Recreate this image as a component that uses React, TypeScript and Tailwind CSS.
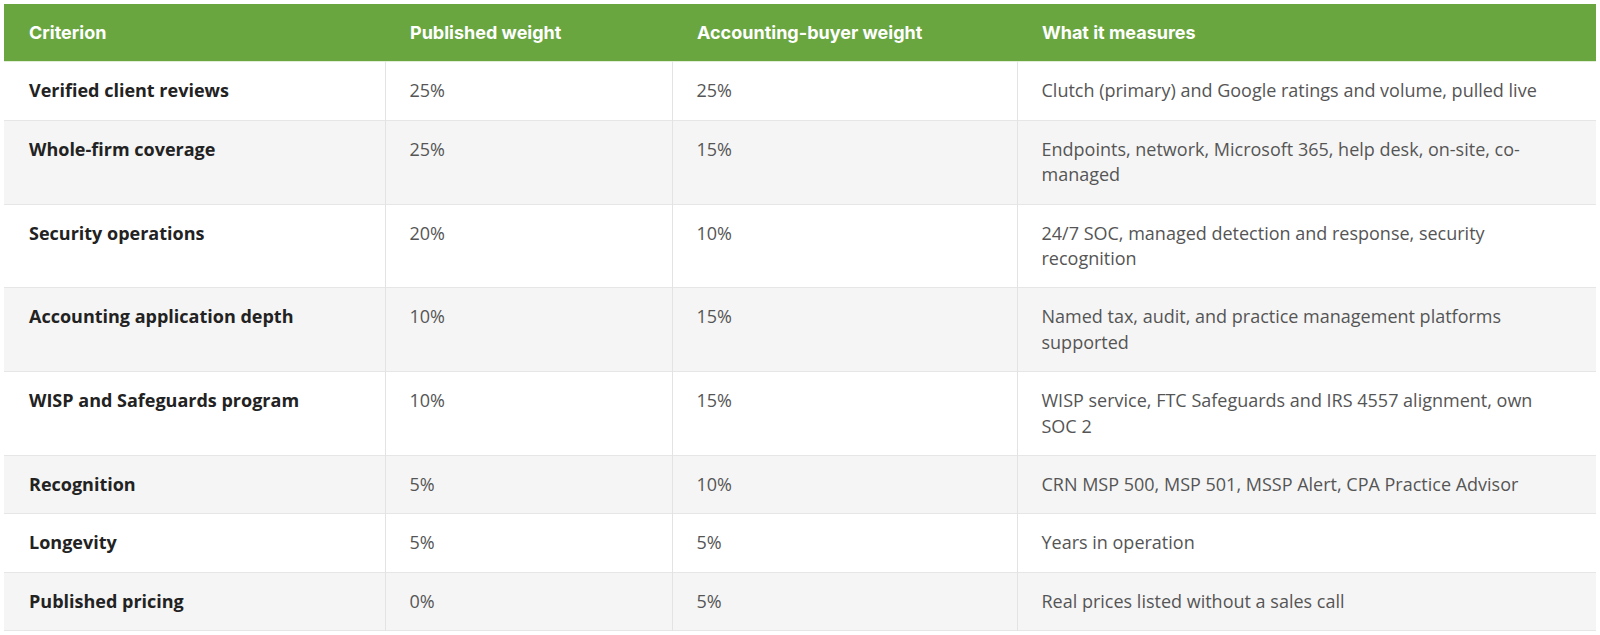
const rows = [
  { name: 'Verified client reviews', pub: '25%', acc: '25%', what: 'Clutch (primary) and Google ratings and volume, pulled live' },
  { name: 'Whole-firm coverage', pub: '25%', acc: '15%', what: 'Endpoints, network, Microsoft 365, help desk, on-site, co-managed' },
  { name: 'Security operations', pub: '20%', acc: '10%', what: '24/7 SOC, managed detection and response, security recognition' },
  { name: 'Accounting application depth', pub: '10%', acc: '15%', what: 'Named tax, audit, and practice management platforms supported' },
  { name: 'WISP and Safeguards program', pub: '10%', acc: '15%', what: 'WISP service, FTC Safeguards and IRS 4557 alignment, own SOC 2' },
  { name: 'Recognition', pub: '5%', acc: '10%', what: 'CRN MSP 500, MSP 501, MSSP Alert, CPA Practice Advisor' },
  { name: 'Longevity', pub: '5%', acc: '5%', what: 'Years in operation' },
  { name: 'Published pricing', pub: '0%', acc: '5%', what: 'Real prices listed without a sales call' },
];

export default function App() {
  return (
    <div className="min-h-[635px] bg-white p-1">
      <table className="w-[1592px] table-fixed border-collapse text-left font-['Open_Sans',sans-serif] text-[18px] leading-[25.4px]">
        <colgroup>
          <col className="w-[381px]" />
          <col className="w-[287px]" />
          <col className="w-[345px]" />
          <col className="w-[579px]" />
        </colgroup>
        <thead>
          <tr className="border-b border-[#dfeed5] bg-[#6aa640] font-['Inter',sans-serif] text-white">
            <th className="px-[25px] py-4 text-[18px] font-bold">Criterion</th>
            <th className="px-[25px] py-4 text-[18px] font-bold">Published weight</th>
            <th className="px-[25px] py-4 text-[18px] font-bold">Accounting-buyer weight</th>
            <th className="px-[25px] py-4 text-[18px] font-bold">What it measures</th>
          </tr>
        </thead>
        <tbody>
          {rows.map((r, i) => (
            <tr key={r.name} className={`border-b border-[#e6e6e6] align-top ${i % 2 === 1 ? 'bg-[#f5f5f5]' : 'bg-white'}`}>
              <td className="px-[25px] py-4 font-bold text-[#222222]">{r.name}</td>
              <td className="border-l border-[#e3e3e3] px-[24px] py-4 text-[#555555]">{r.pub}</td>
              <td className="border-l border-[#e3e3e3] px-[24px] py-4 text-[#555555]">{r.acc}</td>
              <td className="border-l border-[#e3e3e3] px-[24px] py-4 text-[#555555]">{r.what}</td>
            </tr>
          ))}
        </tbody>
      </table>
    </div>
  );
}
